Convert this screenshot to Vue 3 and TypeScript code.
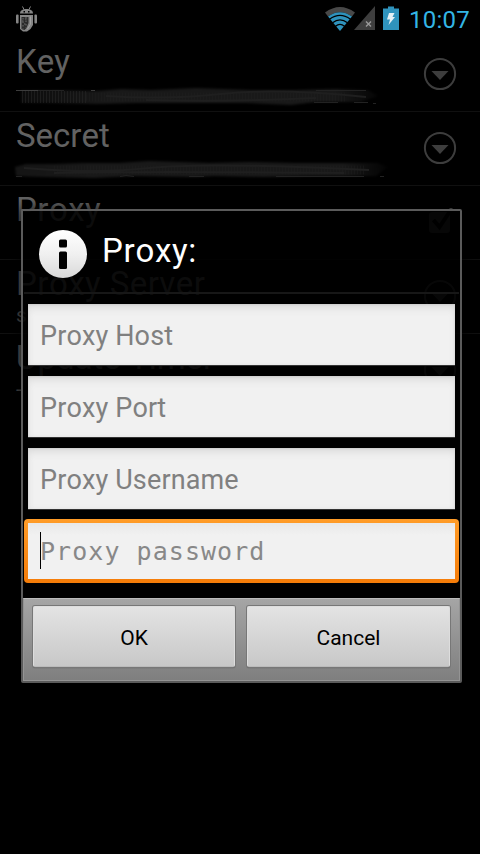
<script setup lang="ts">
import { ref } from 'vue'

interface Setting {
  label: string
  control: 'arrow' | 'check'
  summary?: string
  scribble?: number
}

interface Field {
  hint: string
  secret?: boolean
}

const settings: Setting[] = [
  { label: 'Key', control: 'arrow', scribble: 1 },
  { label: 'Secret', control: 'arrow', scribble: 2 },
  { label: 'Proxy', control: 'check' },
  { label: 'Proxy Server', control: 'arrow', summary: 's' },
  { label: 'Update Timer', control: 'arrow', summary: '-' },
]

const fields: Field[] = [
  { hint: 'Proxy Host' },
  { hint: 'Proxy Port' },
  { hint: 'Proxy Username' },
  { hint: 'Proxy password', secret: true },
]

const focused = ref(3)
</script>

<template>
  <div class="screen">
    <header class="status">
      <svg class="droid" width="24" height="28" viewBox="0 0 24 28">
        <g fill="#858585">
          <path d="M5 7.500C5 4.500 7.500 3 11.500 3S18 4.500 18 7.500Z" />
          <path d="M7.500 .500l1.500 3M15.500 .500l-1.500 3" stroke="#858585" stroke-width="1" />
          <rect x="1" y="8.500" width="2.600" height="9" rx="1" />
          <rect x="19.400" y="8.500" width="2.600" height="9" rx="1" />
          <path d="M5 9h13v10l-2.500 4-3.500 2.500H8L5 23Z" />
        </g>
        <path d="M6.500 11h7v6l-2 5-2 2-3-1Z" fill="#2b2b2b" />
        <path d="M8 12v11M11 11v11M7 15h2M9 18h3M10 13h3" stroke="#6d6d6d" stroke-dasharray="1.500 2" />
        <path d="M15.500 10.500v7.500l-3 5" stroke="#aaa" fill="none" stroke-width=".8" />
        <path d="M8.500 5h1.500v1.500H8.500zM13 5h1.500v1.500H13z" fill="#000" />
      </svg>
      <div class="indicators">
        <svg class="wifi" width="30" height="24" viewBox="0 0 30 24">
          <path d="M0 5.500Q15-5.500 30 5.500L27 9.500Q15 1 3 9.500Z" fill="#484848" />
          <path d="M3 9.500Q15 1 27 9.500L15 24Z" fill="#2f93bd" />
          <path d="M4.500 12.300Q15 4.500 25.500 12.300M7.500 15.800Q15 10 22.500 15.800M10.500 19.300Q15 15.500 19.500 19.300" fill="none" stroke="#000" stroke-width="1.300" />
        </svg>
        <svg class="signal" width="21" height="24" viewBox="0 0 21 24">
          <path d="M21 0V24H0Z" fill="#3e3e3e" />
          <path d="M12 15.500l5 5M17 15.500l-5 5" stroke="#9a9a9a" stroke-width="1.400" />
        </svg>
        <svg class="battery" width="16" height="24" viewBox="0 0 16 24">
          <path d="M5 .500h6V2.500h5V24H0V2.500h5Z" fill="#2f93bd" />
          <path d="M6 7h5.500L9.500 11H12L5.500 19 7 13.500H4Z" fill="#e4f0f5" />
        </svg>
        <span class="clock">10:07</span>
      </div>
    </header>

    <main class="settings">
      <section v-for="item in settings" :key="item.label" class="row">
        <div class="copy">
          <div class="label" :class="{ wide: item.label.startsWith('Proxy') }">{{ item.label }}</div>
          <div v-if="item.summary" class="summary">{{ item.summary }}</div>
          <svg v-if="item.scribble === 1" class="scribble" width="370" height="24" viewBox="0 0 370 24">
            <defs>
              <linearGradient id="fadeA" x1="0" x2="1" y1="0" y2="0">
                <stop offset="0" stop-color="#0c0c0c" />
                <stop offset=".25" stop-color="#191919" />
                <stop offset=".88" stop-color="#191919" />
                <stop offset="1" stop-color="#050505" />
              </linearGradient>
            </defs>
            <path class="smear" fill="url(#fadeA)" d="M5 4L40 4 80 5 106 3 135 4 180 2 235 4 280 4 320 3 352 4 362 10 345 16 300 16 275 19 230 17 180 17 120 17 80 18 30 17 5 17Z" />
            <path class="bars" d="M6 11H70" />
            <path class="bars dim" d="M70 11H330" />
            <path class="strand" d="M90 10Q150 14 205 8T350 11M130 14Q220 16 300 12" />
            <path class="edge" d="M0 4.500H22M75 4.500H79" />
            <path class="edge faint" d="M22 4.500H48M300 4.500H350M298 16.500H322M338 16.500H352M357 17.500H360" />
          </svg>
          <svg v-if="item.scribble === 2" class="scribble second" width="380" height="24" viewBox="0 0 380 24">
            <defs>
              <linearGradient id="fadeB" x1="0" x2="1" y1="0" y2="0">
                <stop offset="0" stop-color="#151515" />
                <stop offset=".2" stop-color="#191919" />
                <stop offset=".88" stop-color="#191919" />
                <stop offset="1" stop-color="#030303" />
              </linearGradient>
            </defs>
            <path class="smear" fill="url(#fadeB)" d="M1 8L12 5 40 5 70 4 105 4 135 2 195 4 235 3 280 4 320 4 364 4 374 8 362 17 300 17 250 18 200 17 180 18 120 17 80 19 30 18 2 17Z" />
            <path class="bars dim" d="M40 11H350" />
            <path class="strand" d="M10 9Q80 15 135 9T355 11M40 14Q130 12 330 14" />
            <path class="edge faint" d="M2 17.500H8M106 17.500L112 16.500 120 17.500M175 17.500H190M262 17.500H350M366 17.500H370" />
          </svg>
        </div>
        <svg v-if="item.control === 'arrow'" class="control" width="34" height="34" viewBox="0 0 34 34">
          <circle cx="17" cy="17" r="15.100" fill="none" stroke="#3d3d3d" stroke-width="2" />
          <path d="M8.500 14H25.500L17 23Z" fill="#3d3d3d" />
        </svg>
        <svg v-else class="control" width="34" height="34" viewBox="0 0 34 34">
          <rect x="6" y="7" width="21" height="21" rx="3" fill="#3a3a3a" />
          <path d="M10.500 15l6 7L28.500 4" fill="none" stroke="#000" stroke-width="4" />
          <path d="M26.500 3.500h3" stroke="#555" />
        </svg>
      </section>
    </main>

    <div class="dialog">
      <div class="title">
        <svg class="info" width="50" height="50" viewBox="0 0 50 50">
          <defs>
            <linearGradient id="disc" x1="0" y1="0" x2="0" y2="1">
              <stop offset="0" stop-color="#fff" />
              <stop offset=".5" stop-color="#f0f0f0" />
              <stop offset="1" stop-color="#d9d9d9" />
            </linearGradient>
          </defs>
          <circle cx="25" cy="25" r="24" fill="url(#disc)" />
          <rect x="21" y="10.500" width="8" height="8" rx="1.500" fill="#000" />
          <rect x="21" y="22.500" width="8" height="17.500" rx="1.500" fill="#000" />
        </svg>
        <h1>Proxy:</h1>
      </div>
      <div class="fields">
        <div
          v-for="(field, i) in fields"
          :key="field.hint"
          class="field"
          :class="{ focused: focused === i, secret: field.secret }"
          @click="focused = i"
        >
          <i v-if="focused === i" class="caret"></i>
          <span class="hint">{{ field.hint }}</span>
        </div>
      </div>
      <div class="actions">
        <button type="button">OK</button>
        <button type="button">Cancel</button>
      </div>
    </div>
  </div>
</template>

<style>
body {
  background: #000;
}
</style>

<style scoped>
.screen {
  position: relative;
  width: 480px;
  height: 854px;
  overflow: hidden;
  background: #000;
  font-family: Roboto, sans-serif;
  font-kerning: none;
}
svg {
  display: block;
  flex: none;
}
.status {
  display: flex;
  justify-content: space-between;
  box-sizing: border-box;
  height: 38px;
  padding: 6px 10px 0 15px;
}
.indicators {
  display: flex;
  align-items: flex-start;
}
.wifi {
  margin-top: 1px;
}
.signal {
  margin-left: -1px;
}
.battery {
  margin-left: 8px;
}
.clock {
  width: 61px;
  margin-left: 10px;
  color: #33b5e5;
  font-size: 24px;
  letter-spacing: .25px;
  line-height: 28px;
  white-space: nowrap;
}
.row {
  display: flex;
  align-items: center;
  justify-content: space-between;
  box-sizing: border-box;
  height: 74px;
  padding: 0 23px 0 16px;
  border-bottom: 1px solid #101010;
}
.row:last-child {
  border-bottom-color: transparent;
}
.control {
  margin-bottom: 2px;
}
.copy {
  align-self: flex-start;
  padding-top: 4px;
}
.label {
  height: 39px;
  color: #626262;
  font-size: 33px;
  line-height: 39px;
  white-space: nowrap;
}
.label.wide {
  letter-spacing: .45px;
}
.summary {
  color: #505050;
  font-size: 21px;
  line-height: 25px;
}
.scribble {
  margin-top: 5px;
  overflow: visible;
}
.scribble.second {
  margin-top: 4px;
  margin-left: -2px;
}
.smear {
  filter: blur(1px);
}
.bars {
  fill: none;
  stroke: #262626;
  stroke-width: 12;
  stroke-dasharray: 1 2;
  opacity: .6;
}
.bars.dim {
  stroke: #202020;
  stroke-width: 9;
  opacity: .4;
}
.strand {
  fill: none;
  stroke: #1f1f1f;
  stroke-width: 2;
  filter: blur(.7px);
}
.edge {
  fill: none;
  stroke: #3c3c3c;
}
.edge.faint {
  stroke: #222;
}
.dialog {
  position: absolute;
  top: 209px;
  left: 21px;
  display: flex;
  flex-direction: column;
  box-sizing: border-box;
  width: 441px;
  height: 474px;
  border: 2px solid #5b5b5b;
  border-radius: 2px;
  background: rgba(0, 0, 0, .88);
  background-clip: padding-box;
  box-shadow: 0 2px 12px 3px rgba(0, 0, 0, .7);
}
.title {
  display: flex;
  gap: 14px;
  box-sizing: border-box;
  height: 83px;
  margin: 0 1px;
  padding: 18px 14px 0;
  border-bottom: 2px solid #171717;
}
h1 {
  margin: 2px 0 0;
  color: #fff;
  font-size: 33px;
  font-weight: 400;
  letter-spacing: .7px;
  line-height: 39px;
}
.fields {
  display: flex;
  flex-direction: column;
  gap: 10px;
  padding: 10px 5px 0;
}
.field {
  display: flex;
  align-items: center;
  box-sizing: border-box;
  height: 62px;
  padding: 3px 12px 0;
  border-bottom: 1px solid #343434;
  background: #f1f1f1;
  box-shadow: inset 0 1px 2px #ccc, inset 0 6px 9px -2px #dcdcdc, inset 0 0 5px #e2e2e2;
  background-clip: padding-box;
  color: #808080;
  font-size: 27px;
  letter-spacing: .13px;
  line-height: 32px;
  white-space: nowrap;
}
.field.focused {
  height: 64px;
  margin: -1px -4px 0;
  padding: 0 12px 2px;
  border: 0;
  border-radius: 4px;
  background:
    linear-gradient(#e8e8e8, #f1f1f1 12px) 4px 4px / 427px 56px no-repeat,
    linear-gradient(#ff9c28, #f57c08);
  box-shadow: none;
}
.caret {
  width: 1px;
  height: 37px;
  margin-left: 4px;
  background: #000;
}
.secret .hint {
  margin: 3px 0 0 -1px;
  color: #888;
  font-family: "DejaVu Sans Mono", monospace;
  font-size: 25px;
  letter-spacing: 1.050px;
}
.actions {
  display: flex;
  flex: none;
  gap: 12px;
  box-sizing: border-box;
  height: 83px;
  margin-top: auto;
  padding: 7px 9px 0;
  border: 1px solid #949494;
  border-top-color: #bcbcbc;
  background: linear-gradient(#a5a5a5, #7f7f7f);
}
button {
  flex: 1;
  height: 61px;
  padding: 2px 0 0;
  border: 1px solid #ddd;
  border-bottom-color: #bbb;
  border-radius: 2px;
  background: linear-gradient(#e3e3e3, #c8c8c8);
  box-shadow: 0 0 0 1px #777, 0 1px 1px #444;
  color: #000;
  font-family: Roboto, sans-serif;
  font-size: 21px;
}
button:first-child {
  flex: 0 0 202px;
}
</style>
